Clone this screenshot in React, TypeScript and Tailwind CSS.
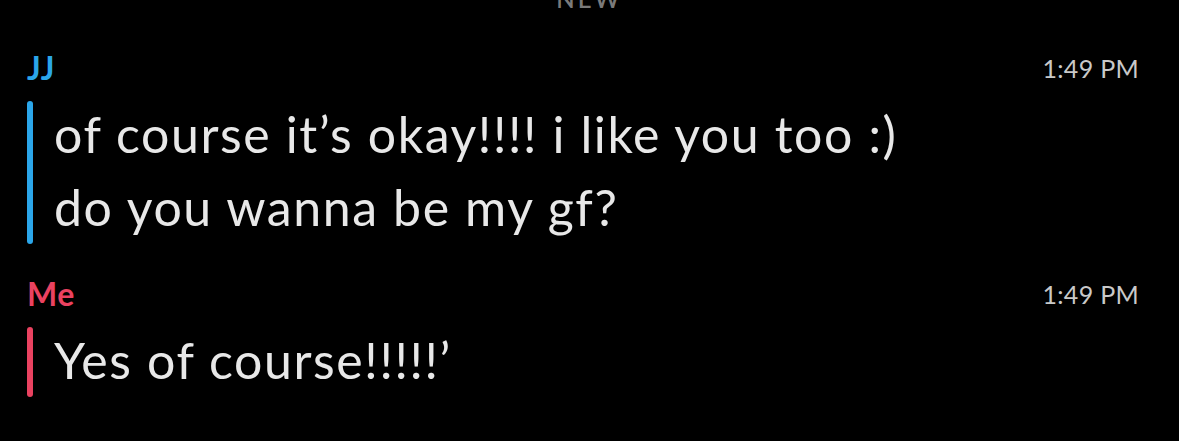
import React from "react";

interface Message {
  sender: string;
  time: string;
  lines: string[];
  color: "blue" | "red";
}

const messages: Message[] = [
  {
    sender: "JJ",
    time: "1:49 PM",
    lines: ["of course it’s okay!!!! i like you too :)", "do you wanna be my gf?"],
    color: "blue",
  },
  {
    sender: "Me",
    time: "1:49 PM",
    lines: ["Yes of course!!!!!’"],
    color: "red",
  },
];

const MessageGroup: React.FC<{ msg: Message }> = ({ msg }) => {
  const nameColor = msg.color === "blue" ? "text-[#2ba6ea]" : "text-[#ea4260]";
  const barColor = msg.color === "blue" ? "bg-[#2ba6ea]" : "bg-[#ea4260]";

  return (
    <div className="flex flex-col">
      {/* Sender and time */}
      <div className="flex items-start justify-between h-[40px] leading-[40px]">
        <span className={`text-[32px] font-bold tracking-[0.5px] ${nameColor}`}>{msg.sender}</span>
        <span className="text-[25px] text-[#c9c9c9] tracking-[0.3px]">{msg.time}</span>
      </div>

      {/* Body with side bar */}
      <div className="flex gap-[21px] mt-[13px]">
        <div className={`w-[6px] shrink-0 rounded-full ${barColor}`} />
        <div className="flex flex-col -mt-[3px]">
          {msg.lines.map((line, i) => (
            <p key={i} className="text-[50px] leading-[73px] tracking-[1.6px] text-[#e8e8e8]">
              {line}
            </p>
          ))}
        </div>
      </div>
    </div>
  );
};

export default function App() {
  return (
    <div
      className="w-[1179px] h-[441px] bg-black overflow-hidden relative"
      style={{ fontFamily: "Lato, 'Open Sans', sans-serif" }}
    >
      <div className="absolute top-[-19px] left-0 right-0 text-center text-[24px] tracking-[3px] text-[#7a7a7a] font-semibold">
        NEW
      </div>
      <div className="flex flex-col gap-[30px] pt-[48px] pl-[27px] pr-[40px]">
        {messages.map((m, i) => (
          <MessageGroup key={i} msg={m} />
        ))}
      </div>
    </div>
  );
}
